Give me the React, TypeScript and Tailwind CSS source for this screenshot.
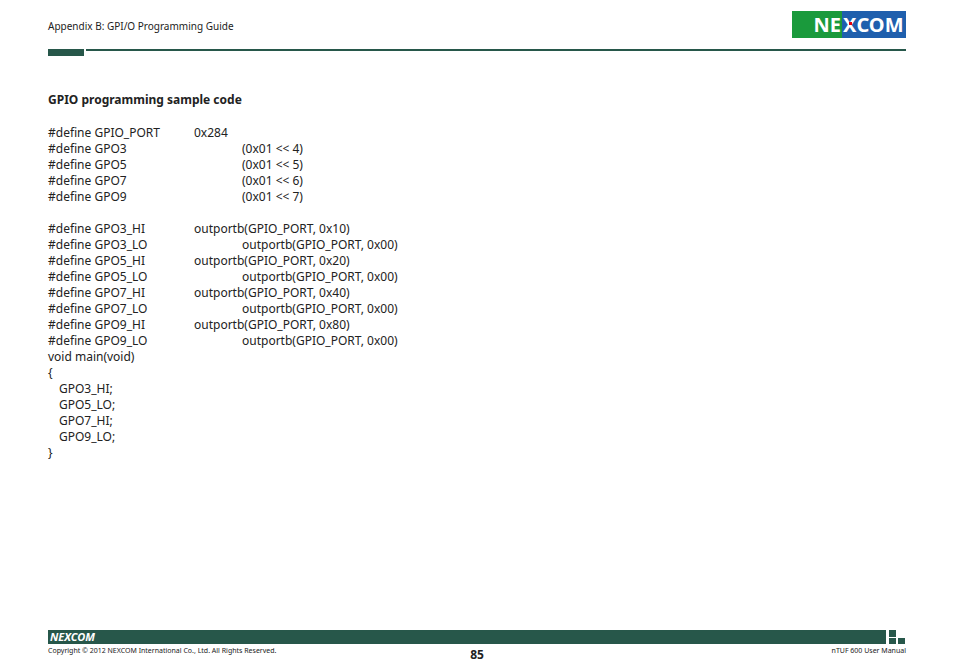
const rows: [string, string, boolean][] = [
  ["#define GPIO_PORT", "0x284", false],
  ["#define GPO3", "(0x01 << 4)", true],
  ["#define GPO5", "(0x01 << 5)", true],
  ["#define GPO7", "(0x01 << 6)", true],
  ["#define GPO9", "(0x01 << 7)", true],
];
const rows2: [string, string, boolean][] = [
  ["#define GPO3_HI", "outportb(GPIO_PORT, 0x10)", false],
  ["#define GPO3_LO", "outportb(GPIO_PORT, 0x00)", true],
  ["#define GPO5_HI", "outportb(GPIO_PORT, 0x20)", false],
  ["#define GPO5_LO", "outportb(GPIO_PORT, 0x00)", true],
  ["#define GPO7_HI", "outportb(GPIO_PORT, 0x40)", false],
  ["#define GPO7_LO", "outportb(GPIO_PORT, 0x00)", true],
  ["#define GPO9_HI", "outportb(GPIO_PORT, 0x80)", false],
  ["#define GPO9_LO", "outportb(GPIO_PORT, 0x00)", true],
];

function Row({ r }: { r: [string, string, boolean] }) {
  return (
    <div className="flex h-4 items-center">
      <span className="w-[146px]">{r[0]}</span>
      <span className={r[2] ? "pl-[48px]" : ""}>{r[1]}</span>
    </div>
  );
}

function Logo() {
  return (
    <div className="flex h-[27px] w-[114px]">
      <div className="flex w-[50px] items-center justify-end bg-[#1a9a3c] pr-[1px] text-[20px] font-bold text-white [clip-path:polygon(0_0,100%_0,100%_100%,0_100%)]">
        NE
      </div>
      <div className="flex flex-1 items-center bg-[#1f5fad] pl-[1px] text-[20px] font-bold text-white">
        <span className="relative">X<span className="absolute left-[6px] top-[12px] h-[3px] w-[3px] bg-red-600" /></span>COM
      </div>
    </div>
  );
}

export default function App() {
  return (
    <div className="relative h-[672px] w-[954px] bg-white text-[#222] [font-family:'Open_Sans',sans-serif]">
      <div className="flex items-start justify-between px-[48px] pt-[11px]">
        <div className="pt-[8px] text-[10px]">Appendix B: GPI/O Programming Guide</div>
        <Logo />
      </div>
      <div className="mt-[11px] flex items-start px-[48px]">
        <div className="h-[7px] w-[36px] bg-[#27574a]" />
        <div className="ml-[2px] h-[2px] flex-1 bg-[#27574a]" />
      </div>
      <div className="px-[48px] text-[12px]">
        <div className="mt-[35px] font-bold">GPIO programming sample code</div>
        <div className="mt-[16px] leading-4">
          {rows.map((r, i) => <Row key={i} r={r} />)}
          <div className="h-4" />
          {rows2.map((r, i) => <Row key={i} r={r} />)}
          <div className="h-4">void main(void)</div>
          <div className="h-4">{"{"}</div>
          <div className="h-4 pl-[11px]">GPO3_HI;</div>
          <div className="h-4 pl-[11px]">GPO5_LO;</div>
          <div className="h-4 pl-[11px]">GPO7_HI;</div>
          <div className="h-4 pl-[11px]">GPO9_LO;</div>
          <div className="h-4">{"}"}</div>
        </div>
      </div>
      <div className="absolute left-[48px] right-[48px] top-[630px]">
        <div className="flex items-end">
          <div className="flex h-[14px] flex-1 items-center bg-[#27574a] pl-[2px] text-[11px] font-bold italic text-white">NEXCOM</div>
          <div className="ml-[3px] flex w-[17px] flex-col">
            <div className="h-[7px] w-[7px] bg-[#27574a]" />
            <div className="mt-[1px] flex gap-[2px]">
              <div className="h-[6px] w-[7px] bg-[#27574a]" />
              <div className="h-[6px] w-[7px] bg-[#27574a]" />
            </div>
          </div>
        </div>
        <div className="mt-[2px] flex items-start justify-between text-[7px]">
          <span className="w-[300px]">Copyright © 2012 NEXCOM International Co., Ltd. All Rights Reserved.</span>
          <span className="text-[12px] font-bold">85</span>
          <span className="w-[300px] text-right">nTUF 600 User Manual</span>
        </div>
      </div>
    </div>
  );
}
